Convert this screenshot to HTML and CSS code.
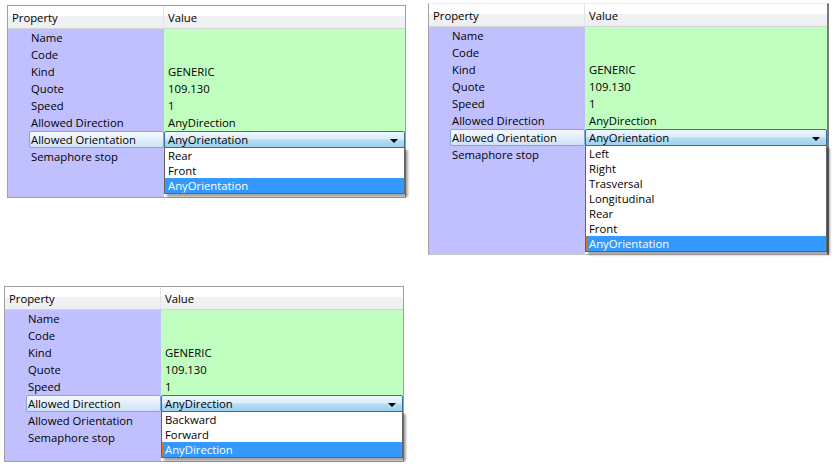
FILE: index.html
```html
<!DOCTYPE html>
<html>
<head>
<meta charset="utf-8">
<link rel="stylesheet" href="styles.css">
</head>
<body>
<div class="page">

  <section class="panel p1">
    <div class="hdr"><div class="hc hp">Property</div><div class="hc hv">Value</div></div>
    <div class="body">
      <div class="pc">Name</div><div class="vc"></div>
      <div class="pc">Code</div><div class="vc"></div>
      <div class="pc">Kind</div><div class="vc">GENERIC</div>
      <div class="pc">Quote</div><div class="vc">109.130</div>
      <div class="pc">Speed</div><div class="vc">1</div>
      <div class="pc">Allowed Direction</div><div class="vc">AnyDirection</div>
      <div class="pc"><span class="sel">Allowed Orientation</span></div>
      <div class="vc open">
        <div class="combo">AnyOrientation<span class="arrow"></span></div>
        <ul class="list">
          <li>Rear</li>
          <li>Front</li>
          <li class="on">AnyOrientation</li>
        </ul>
      </div>
      <div class="pc">Semaphore stop</div><div class="vc"></div>
      <div class="pc fill"></div><div class="vc fill"></div>
    </div>
  </section>

  <section class="panel p2">
    <div class="hdr"><div class="hc hp">Property</div><div class="hc hv">Value</div></div>
    <div class="body">
      <div class="pc">Name</div><div class="vc"></div>
      <div class="pc">Code</div><div class="vc"></div>
      <div class="pc">Kind</div><div class="vc">GENERIC</div>
      <div class="pc">Quote</div><div class="vc">109.130</div>
      <div class="pc">Speed</div><div class="vc">1</div>
      <div class="pc">Allowed Direction</div><div class="vc">AnyDirection</div>
      <div class="pc"><span class="sel">Allowed Orientation</span></div>
      <div class="vc open">
        <div class="combo">AnyOrientation<span class="arrow"></span></div>
        <ul class="list">
          <li>Left</li>
          <li>Right</li>
          <li>Trasversal</li>
          <li>Longitudinal</li>
          <li>Rear</li>
          <li>Front</li>
          <li class="on">AnyOrientation</li>
        </ul>
      </div>
      <div class="pc">Semaphore stop</div><div class="vc"></div>
      <div class="pc fill"></div><div class="vc fill"></div>
    </div>
  </section>

  <section class="panel p3">
    <div class="hdr"><div class="hc hp">Property</div><div class="hc hv">Value</div></div>
    <div class="body">
      <div class="pc">Name</div><div class="vc"></div>
      <div class="pc">Code</div><div class="vc"></div>
      <div class="pc">Kind</div><div class="vc">GENERIC</div>
      <div class="pc">Quote</div><div class="vc">109.130</div>
      <div class="pc">Speed</div><div class="vc">1</div>
      <div class="pc"><span class="sel">Allowed Direction</span></div>
      <div class="vc open">
        <div class="combo">AnyDirection<span class="arrow"></span></div>
        <ul class="list">
          <li>Backward</li>
          <li>Forward</li>
          <li class="on">AnyDirection</li>
        </ul>
      </div>
      <div class="pc">Allowed Orientation</div><div class="vc"></div>
      <div class="pc">Semaphore stop</div><div class="vc"></div>
      <div class="pc fill"></div><div class="vc fill"></div>
    </div>
  </section>

</div>
</body>
</html>
```

FILE: styles.css
```css
* { box-sizing: border-box; }
html, body { margin: 0; padding: 0; background: #fff; }
body {
  font-family: "Open Sans", "Liberation Sans", sans-serif;
  font-size: 11.3px;
  color: #000;
  width: 838px;
  height: 471px;
  overflow: hidden;
}
.page {
  display: grid;
  grid-template-columns: 421px 417px;
  grid-template-rows: 286px 185px;
  align-items: start;
}
.panel {
  display: flex;
  flex-direction: column;
  border: 1px solid #a0a0a0;
  background: #fff;
  width: 399px;
}
.p1 { margin: 5px 0 0 7px; height: 193px; }
.p2 {
  margin: 3px 0 0 7px; height: 252px; width: 401px;
  border-top-color: #ececec;
  border-right: 2px solid #7a7a7a;
  border-bottom-color: #c8c8c8;
}
.p3 { margin: 0 0 0 4px; height: 176px; width: 400px; }

.hdr {
  display: grid;
  grid-template-columns: 156px 1fr;
  height: 23px;
  border-bottom: 1px solid #d5d5d5;
  background: linear-gradient(#ffffff 0, #ffffff 45%, #f1f2f4 46%, #eeeff1 100%);
  flex: none;
}
.hc { display: flex; align-items: center; padding-left: 4px; }
.hp { border-right: 1px solid #e3e5e8; }
.hv { padding-left: 4px; }

.body {
  flex: 1;
  display: grid;
  grid-template-columns: 156px 1fr;
  grid-template-rows: repeat(8, 17px) 1fr;
}
.pc {
  background: #c0c0ff;
  padding-left: 23px;
  display: flex;
  align-items: center;
  white-space: nowrap;
}
.vc {
  background: #c0ffc0;
  padding-left: 4px;
  display: flex;
  align-items: center;
  white-space: nowrap;
}
.pc.fill { background: #c0c0ff; }
.vc.fill { background: #fff; }

.pc .sel {
  margin-left: -2px;
  width: calc(100% + 2px);
  height: 17px;
  padding-left: 1px;
  display: flex;
  align-items: center;
  border: 1px solid #84a8d4;
  border-radius: 2px;
  background: linear-gradient(#f4f9fe 0, #e3eefb 50%, #cfe1f6 100%);
}

.vc.open { position: relative; padding: 0; z-index: 2; }
.combo {
  width: 100%;
  height: 17px;
  padding-left: 3px;
  display: flex;
  align-items: center;
  border: 1px solid #3c6f99;
  border-radius: 2px;
  background: linear-gradient(#eef7fd 0, #dbeefb 45%, #b6dcf3 55%, #9fd0ee 100%);
  position: relative;
}
.arrow {
  position: absolute;
  right: 6px;
  top: 7px;
  width: 0;
  height: 0;
  border-left: 4px solid transparent;
  border-right: 4px solid transparent;
  border-top: 4px solid #000;
}
.list {
  position: absolute;
  left: 0;
  right: 0;
  top: 16px;
  margin: 0;
  padding: 0;
  list-style: none;
  background: #fff;
  border: 1px solid #646464;
  box-shadow: 3px 3px 2px rgba(0, 0, 0, 0.35);
}
.list li {
  height: 15px;
  padding-left: 3px;
  display: flex;
  align-items: center;
}
.list li.on {
  background: #3399ff;
  color: #fff;
  outline: 1px dotted #d8761c;
  outline-offset: -1px;
}
```
